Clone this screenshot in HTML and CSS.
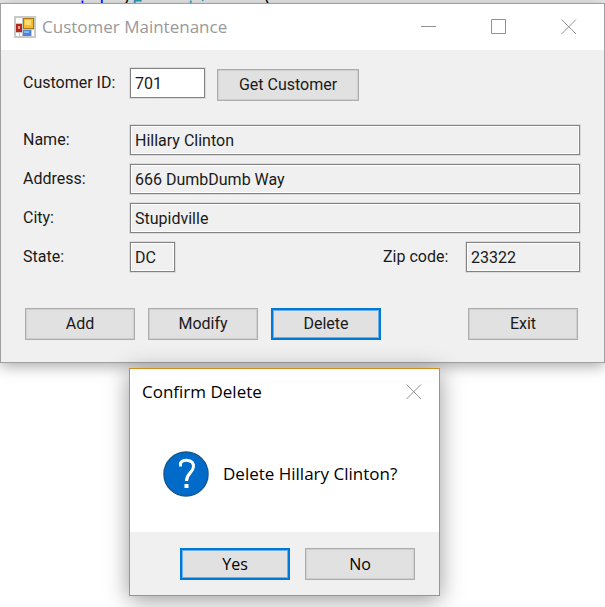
FILE: index.html
```html
<!DOCTYPE html>
<html lang="en">
<head>
<meta charset="utf-8">
<title>Customer Maintenance</title>
<link rel="stylesheet" href="styles.css">
</head>
<body>
<div class="editor" aria-hidden="true"><span class="keyword">catch</span> (<span class="type">Exception</span> ex)</div>
<main class="window">
  <header class="titlebar">
    <svg class="app-icon" width="22" height="22" viewBox="0 0 22 22" aria-hidden="true">
      <rect x="0" y="0" width="22" height="22" fill="#c9c9c9"/>
      <rect x="2" y="2" width="6" height="5" fill="#fff"/>
      <rect x="2" y="17" width="3" height="3" fill="#fff"/>
      <rect x="6" y="17" width="2" height="3" fill="#fff"/>
      <rect x="18" y="14" width="2" height="6" fill="#fff"/>
      <rect x="2" y="8" width="6" height="8" fill="#b5271d"/>
      <rect x="4" y="10" width="2" height="3" fill="#efa096"/>
      <rect x="9" y="2" width="11" height="11" fill="#a87808"/>
      <rect x="10" y="3" width="9" height="9" fill="#f3bd2d"/>
      <rect x="11" y="4" width="6" height="5" fill="#ffdc73"/>
      <rect x="9" y="14" width="8" height="6" fill="#4d83dc"/>
      <rect x="10" y="15" width="5" height="2" fill="#8db5f5"/>
    </svg>
    <h1 class="title">Customer Maintenance</h1>
    <button class="caption" aria-label="Minimize"><svg width="16" height="16" viewBox="0 0 16 16"><path d="M0 7.5H15"/></svg></button>
    <button class="caption" aria-label="Maximize"><svg width="16" height="16" viewBox="0 0 16 16"><path d="M.5 .5H14.500V14.500H.5Z"/></svg></button>
    <button class="caption" aria-label="Close"><svg width="16" height="16" viewBox="0 0 16 16"><path d="M.5 .5L15 15M15 .5L.5 15"/></svg></button>
  </header>
  <form class="form">
    <div class="row lookup">
      <label for="id">Customer ID:</label>
      <input class="field id" id="id" value="701">
      <button class="button get" type="button">Get Customer</button>
    </div>
    <div class="row">
      <label for="name">Name:</label>
      <input class="field wide" id="name" value="Hillary Clinton" readonly>
    </div>
    <div class="row">
      <label for="address">Address:</label>
      <input class="field wide" id="address" value="666 DumbDumb Way" readonly>
    </div>
    <div class="row">
      <label for="city">City:</label>
      <input class="field wide" id="city" value="Stupidville" readonly>
    </div>
    <div class="row">
      <label for="state">State:</label>
      <input class="field state" id="state" value="DC" readonly>
      <label class="zip-label" for="zip">Zip code:</label>
      <input class="field zip" id="zip" value="23322" readonly>
    </div>
    <div class="actions">
      <button class="button" type="button">Add</button>
      <button class="button" type="button">Modify</button>
      <button class="button default" type="button">Delete</button>
      <button class="button exit" type="button">Exit</button>
    </div>
  </form>
</main>
<section class="dialog" role="dialog" aria-labelledby="dialog-title">
  <header class="dialog-bar">
    <h2 class="title" id="dialog-title">Confirm Delete</h2>
    <button class="caption" aria-label="Close"><svg width="16" height="16" viewBox="0 0 16 16"><path d="M.5 .5L15 15M15 .5L.5 15"/></svg></button>
  </header>
  <div class="message">
    <svg width="46" height="46" viewBox="0 0 46 46" aria-hidden="true">
      <circle cx="23" cy="23" r="22" fill="#006bc9" stroke="#17588f" stroke-width="1.500"/>
      <path d="M17.500 15.500V12C20 8.500 30.500 7.500 30.500 15.500C30.500 21.500 23.500 22 23.500 30" fill="none" stroke="#fff" stroke-width="3"/>
      <rect x="21.500" y="33" width="4" height="4" fill="#fff"/>
    </svg>
    <p>Delete Hillary Clinton?</p>
  </div>
  <footer class="dialog-actions">
    <button class="button default" type="button">Yes</button>
    <button class="button" type="button">No</button>
  </footer>
</section>
</body>
</html>
```
FILE: styles.css
```css
* { box-sizing: border-box; }

body {
  margin: 0;
  background: #fff;
  color: #1a1a1a;
  font: 16px/20px Roboto, "Liberation Sans", sans-serif;
}

.editor {
  height: 3px;
  overflow: hidden;
  padding-left: 56px;
  background: #ececec;
  color: #000;
  font: 18px/14px "DejaVu Sans Mono", monospace;
  white-space: pre;
}
.keyword { color: #00f; }
.type { color: #2b91af; }

.window {
  border: 1px solid #a0a0a0;
  background: #f0f0f0;
  box-shadow: 0 3px 14px rgba(0, 0, 0, .35);
}

.titlebar {
  display: flex;
  align-items: center;
  height: 46px;
  padding-left: 13px;
  background: #fff;
}
.title {
  flex: 1;
  margin: 0;
  font: 17px/24px "Open Sans", "Noto Sans", sans-serif;
}
.titlebar .title { padding-left: 6px; color: #999; }

.caption {
  display: flex;
  align-items: center;
  justify-content: center;
  width: 70px;
  height: 46px;
  padding: 0;
  border: 0;
  background: none;
}
.caption svg { fill: none; stroke: #929292; stroke-width: 1; }

.form {
  display: flex;
  flex-direction: column;
  gap: 9px;
  padding: 18px 24px 22px 22px;
}
.row { display: flex; align-items: center; }
.row label { width: 107px; }
.lookup { align-items: flex-start; margin-bottom: 15px; }
.lookup label { line-height: 30px; }

.field {
  height: 30px;
  padding: 0 4px;
  border: 1px solid #828282;
  border-radius: 0;
  outline: 1px solid #dcdcdc;
  background: #fff;
  color: inherit;
  font: inherit;
}
.field:read-only {
  background: #f0f0f0;
  box-shadow: inset 0 0 0 1px #fff;
}
.id { width: 75px; }
.wide { flex: 1; min-width: 0; }
.state { width: 45px; }
.zip { width: 114px; }
.row .zip-label { width: 83px; margin-left: auto; }

.button {
  width: 110px;
  height: 32px;
  padding: 0;
  border: 1px solid #adadad;
  border-radius: 0;
  background: #e1e1e1;
  box-shadow: inset 0 0 0 1px #cfcfcf;
  color: inherit;
  font: inherit;
}
.get { width: 142px; margin-top: 1px; margin-left: 12px; }
.default { border: 2px solid #0078d7; box-shadow: inset 0 0 0 1px #6cb0e8; }

.actions {
  display: flex;
  gap: 13px;
  margin-top: 27px;
  padding: 0 2px;
}
.exit { margin-left: auto; }

.dialog {
  position: relative;
  width: 311px;
  margin: 5px 0 11px 129px;
  border: 1px solid #d78a1e;
  background: #fff;
  color: #000;
  box-shadow: 0 4px 22px rgba(0, 0, 0, .4);
}
.dialog-bar { display: flex; align-items: center; padding-left: 12px; }
.dialog-bar .caption { width: 50px; }
.message {
  display: flex;
  align-items: center;
  gap: 14px;
  height: 117px;
  padding-left: 33px;
  font: 17px/24px "Open Sans", "Noto Sans", sans-serif;
}
.message p { margin: 0; }
.dialog-actions {
  display: flex;
  justify-content: flex-end;
  gap: 15px;
  padding: 16px 24px 15px;
  background: #f0f0f0;
}
.dialog-actions .button { font-family: "Open Sans", "Noto Sans", sans-serif; }
```
